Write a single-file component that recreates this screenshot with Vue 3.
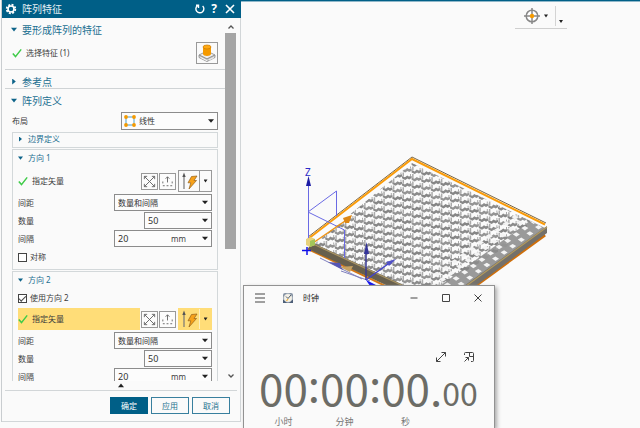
<script setup>
import { ref } from 'vue'

const layout = ref('线性')
const symmetric = ref(false)
const useSecond = ref(true)
const first = ref({ spacing: '数量和间隔', count: '50', gap: '20' })
const second = ref({ spacing: '数量和间隔', count: '50', gap: '20' })

// Cube lattice on the top face, with flatter tiles along the right-hand edge
const shade = ['#8b8b8b', '#949494', '#868686']
const bandTop = (x) => 209 + (544 - x) * 0.72
const cells = []
for (let i = 0; i < 26; i++) {
  for (let j = 0; j < 24; j++) {
    const x = 306 + i * 9.6
    const y = 150 + j * 7.4 + ((i * 1.6) % 7.4)
    if (x > 440 && y > bandTop(x)) continue
    cells.push({ x, y, fill: shade[(i * 2 + j) % 3] })
  }
}
const tiles = []
for (let a = 0; a < 16; a++) {
  for (let b = 0; b < 4; b++) {
    tiles.push({ x: 535 - a * 8.6 - b * 5, y: 227 + a * 6.3 - b * 5.4 })
  }
}
</script>

<template>
  <main class="workspace">
    <form class="dialog" @submit.prevent>
      <header class="dialog-head">
        <svg class="gear" viewBox="0 0 12 12" aria-hidden="true">
          <circle cx="6" cy="6" r="4.3" fill="none" stroke="#fff" stroke-width="1.8" stroke-dasharray="2 1.38" />
          <circle cx="6" cy="6" r="3" fill="none" stroke="#fff" stroke-width="1.6" />
        </svg>
        <h1>阵列特征</h1>
        <button type="button" class="head-btn" aria-label="重置">
          <svg viewBox="0 0 12 12"><path d="M3.500 2.600A4 4 0 1 0 8.600 2.900M4.500 5V2.200H2" fill="none" stroke="#fff" stroke-width="1.400" /></svg>
        </button>
        <button type="button" class="head-btn help" aria-label="帮助">?</button>
        <button type="button" class="head-btn" aria-label="关闭">
          <svg viewBox="0 0 12 12"><path d="M2 2l8 8M10 2l-8 8" stroke="#fff" stroke-width="1.600" /></svg>
        </button>
      </header>

      <div class="scroller">
        <div class="content">
          <section class="section">
            <h2 class="title"><i class="tri down"></i>要形成阵列的特征</h2>
            <div class="pick-row">
              <svg class="tick" viewBox="0 0 10 10"><path d="M.8 5.600l2.700 3L9.200 1.400" /></svg>
              <span class="label">选择特征 (1)</span>
              <button type="button" class="feature-btn" aria-label="特征">
                <svg viewBox="0 0 20 20">
                  <path d="M2 12l8-4 8 4-8 4z" fill="#eee" stroke="#888" stroke-width=".8" />
                  <path d="M2 12v2.500l8 4 8-4V12l-8 4z" fill="#d5d5d5" stroke="#888" stroke-width=".8" />
                  <path d="M3.500 14.500l6.500 3.200M12 17l5-2.500" stroke="#fff" stroke-width=".8" />
                  <path d="M6 4v7c0 2.600 8 2.600 8 0V4z" fill="#f59a00" />
                  <ellipse cx="10" cy="4" rx="4" ry="2" fill="#ffa914" stroke="#c97a00" stroke-width=".7" />
                </svg>
              </button>
            </div>
          </section>
          <section class="section">
            <h2 class="title"><i class="tri right"></i>参考点</h2>
          </section>
          <section class="section last">
            <h2 class="title"><i class="tri down"></i>阵列定义</h2>
            <div class="row layout-row">
              <label for="layout">布局</label>
              <div class="select-wrap layout-select">
                <svg class="linear" viewBox="0 0 12 12" aria-hidden="true">
                  <path d="M2 2h8v8H2z" fill="#fff" stroke="#4f9fc6" />
                  <g fill="#f59a00"><circle cx="2" cy="2" r="1.900" /><circle cx="10" cy="2" r="1.900" /><circle cx="2" cy="10" r="1.900" /><circle cx="10" cy="10" r="1.900" /></g>
                </svg>
                <select id="layout" v-model="layout"><option>线性</option></select>
                <i class="caret"></i>
              </div>
            </div>

            <div class="group">
              <h3 class="group-title flat"><i class="tri right"></i>边界定义</h3>
            </div>

            <div class="group">
              <h3 class="group-title"><i class="tri down"></i>方向 1</h3>
              <div class="vector-row spaced">
                <div class="vector-label">
                  <svg class="tick" viewBox="0 0 10 10"><path d="M.8 5.600l2.700 3L9.200 1.400" /></svg>
                  <span class="label">指定矢量</span>
                </div>
                <button type="button" class="small-btn" aria-label="反向"><svg viewBox="0 0 16 16"><path d="M2.500 13.500l11-11M2.500 2.500l11 11M10.500 2.500h3v3M2.500 5.500v-3h3M2.500 10.500v3h3M13.500 10.500v3h-3" /></svg></button>
                <button type="button" class="small-btn" aria-label="矢量构造器"><svg viewBox="0 0 16 16"><path d="M8 9V3M6 5l2-2 2 2M3 8v2M13 8v2M3 12.500h2M7 12.500h2M11 12.500h2" /></svg></button>
                <div class="split">
                  <button type="button" class="bolt" aria-label="自动判断的矢量"><svg viewBox="0 0 20 20"><path d="M5 18V4" stroke="#777" stroke-width="1.200" /><path d="M5 1.500L3.300 6h3.400z" fill="#555" /><path d="M12.500 5.500l5.500-.5-3 4.500h2.500L10 18l1.800-6.200H9z" fill="#f7a11a" stroke="#936019" stroke-width=".7" /></svg></button>
                  <button type="button" class="more" aria-label="更多矢量"><i class="caret tiny"></i></button>
                </div>
              </div>
              <div class="row">
                <label for="spacing1">间距</label>
                <div class="select-wrap wide"><select id="spacing1" v-model="first.spacing"><option>数量和间隔</option></select><i class="caret"></i></div>
              </div>
              <div class="row">
                <label for="count1">数量</label>
                <div class="combo narrow"><input id="count1" v-model="first.count" type="text"><button type="button" aria-label="数量选项"><i class="caret"></i></button></div>
              </div>
              <div class="row">
                <label for="gap1">间隔</label>
                <div class="combo wide"><input id="gap1" v-model="first.gap" type="text"><span>mm</span><button type="button" aria-label="间隔选项"><i class="caret"></i></button></div>
              </div>
              <label class="check"><input v-model="symmetric" type="checkbox">对称</label>
            </div>

            <div class="group">
              <h3 class="group-title"><i class="tri down"></i>方向 2</h3>
              <label class="check"><input v-model="useSecond" type="checkbox">使用方向 2</label>
              <div class="vector-row active">
                <div class="vector-label">
                  <svg class="tick" viewBox="0 0 10 10"><path d="M.8 5.600l2.700 3L9.200 1.400" /></svg>
                  <span class="label">指定矢量</span>
                </div>
                <button type="button" class="small-btn" aria-label="反向"><svg viewBox="0 0 16 16"><path d="M2.500 13.500l11-11M2.500 2.500l11 11M10.500 2.500h3v3M2.500 5.500v-3h3M2.500 10.500v3h3M13.500 10.500v3h-3" /></svg></button>
                <button type="button" class="small-btn" aria-label="矢量构造器"><svg viewBox="0 0 16 16"><path d="M8 9V3M6 5l2-2 2 2M3 8v2M13 8v2M3 12.500h2M7 12.500h2M11 12.500h2" /></svg></button>
                <div class="split">
                  <button type="button" class="bolt" aria-label="自动判断的矢量"><svg viewBox="0 0 20 20"><path d="M5 18V4" stroke="#777" stroke-width="1.200" /><path d="M5 1.500L3.300 6h3.400z" fill="#555" /><path d="M12.500 5.500l5.500-.5-3 4.500h2.500L10 18l1.800-6.200H9z" fill="#f7a11a" stroke="#936019" stroke-width=".7" /></svg></button>
                  <button type="button" class="more" aria-label="更多矢量"><i class="caret tiny"></i></button>
                </div>
              </div>
              <div class="row">
                <label for="spacing2">间距</label>
                <div class="select-wrap wide"><select id="spacing2" v-model="second.spacing"><option>数量和间隔</option></select><i class="caret"></i></div>
              </div>
              <div class="row">
                <label for="count2">数量</label>
                <div class="combo narrow"><input id="count2" v-model="second.count" type="text"><button type="button" aria-label="数量选项"><i class="caret"></i></button></div>
              </div>
              <div class="row">
                <label for="gap2">间隔</label>
                <div class="combo wide"><input id="gap2" v-model="second.gap" type="text"><span>mm</span><button type="button" aria-label="间隔选项"><i class="caret"></i></button></div>
              </div>
            </div>
          </section>
        </div>
        <div class="scrollbar" aria-hidden="true">
          <svg viewBox="0 0 10 10"><path d="M2.500 6.500L5 4l2.500 2.500" /></svg>
          <div class="track"><div class="thumb"></div></div>
          <svg viewBox="0 0 10 10"><path d="M2.500 3.500L5 6l2.500-2.500" /></svg>
        </div>
      </div>

      <div class="collapse"><i class="tri up"></i></div>
      <footer class="actions">
        <button type="submit" class="primary">确定</button>
        <button type="button">应用</button>
        <button type="button">取消</button>
      </footer>
    </form>

    <div class="canvas">
      <div class="toolbar">
        <button type="button" class="target" aria-label="定向视图">
          <svg viewBox="0 0 16 16">
            <circle cx="8" cy="8" r="5.800" fill="#fff" stroke="#888" stroke-width="1.500" />
            <path d="M8 0v6M8 10v6M0 8h6M10 8h6" stroke="#888" stroke-width="1.500" />
            <circle cx="8" cy="8" r="2.200" fill="#f59a00" />
          </svg>
          <i class="caret tiny"></i>
        </button>
        <button type="button" class="overflow" aria-label="工具条选项"><i class="caret tiny"></i></button>
      </div>

      <svg class="model" viewBox="300 150 260 160" role="img" aria-label="阵列预览">
        <defs>
          <clipPath id="top-face"><path d="M412 163L545 228L441 304L312 246z" /></clipPath>
        </defs>
        <path d="M412 157L546 222L546 229L441 306L308 248L308 238z" fill="#fbfbfb" />
        <g clip-path="url(#top-face)">
          <path d="M545 210L405 311L441 311L552 230z" fill="#9a9a9a" />
          <g v-for="(c, n) in cells" :key="n" :transform="`translate(${c.x} ${c.y})`">
            <path d="M0 2.500L3 3.800 5.200 2l1.600 1 2.800-.5v2.200L7.200 6 5.500 5 3.200 6.500 0 4.800z" :fill="c.fill" />
            <path d="M.5-1H2v4H.5zM8 .5h1v2H8z" fill="#aaa" />
          </g>
          <path v-for="(t, n) in tiles" :key="'t' + n" d="M0 0l3.500-2L7 .2 3.500 2.500z" fill="#f4f4f4" :transform="`translate(${t.x} ${t.y})`" />
        </g>
        <path d="M545 235L445 308" stroke="#cf6f0a" stroke-width="3" />
        <path d="M547 226v7L443 310h-4v-6z" fill="#74716b" />
        <path d="M547 227L440 305" stroke="#b29a5e" stroke-width="1.200" />
        <path d="M308 249L440 312" stroke="#d77711" stroke-width="2" />
        <path d="M311 242L440 302v8L308 249z" fill="#675f4d" />
        <path d="M311 243L440 303" stroke="#a89364" stroke-width="1.300" />
        <path d="M308 237L412 157L546 223" fill="none" stroke="#7a6542" stroke-width="1" />
        <path d="M308 239L412 159L545 224.500" fill="none" stroke="#fa9c0a" stroke-width="2" />
        <g fill="none" stroke="#6a6ae4">
          <path d="M308.500 184V240M308 212L336.500 191V216M308 212L344.500 230V258" />
          <path d="M307 247v8M302 250.500h9" stroke="#1010e8" stroke-width="1.500" />
          <path d="M320 258L362 279M341 271L370 281" stroke="#8080bd" />
          <path d="M366 280V251" stroke="#383895" stroke-width="1.500" />
          <path d="M366 280L388 264" stroke="#4444ce" stroke-width="1.500" />
        </g>
        <path d="M308.500 176L306 186h5z" fill="#1b1ba4" />
        <path d="M366.500 242L364 254h5z" fill="#34349a" />
        <path d="M396 259l-10 3 3 4z" fill="#5151c7" />
        <path d="M328 262l12 1 3 7z" fill="#5555b4" />
        <path d="M340 267l13-1-3 6z" fill="#c7a263" />
        <path d="M313 243L345 221" stroke="#f09414" stroke-width="1.500" />
        <path d="M352 215l-9 3 2 5 4 0z" fill="#dc8716" />
        <path d="M306 239l5-2 4 2v6l-5 2-4-2z" fill="#e7d17b" />
        <path d="M310 241l5-2v6l-5 2z" fill="#a3c559" />
        <path d="M366 280l12 6h-8z" fill="#1212ef" />
      </svg>
      <span class="axis">Z</span>

      <section class="clock">
        <header class="clock-head">
          <button type="button" aria-label="菜单"><svg viewBox="0 0 12 12"><path d="M1 2h10M1 6h10M1 10h10" /></svg></button>
          <svg class="clock-logo" viewBox="0 0 12 12" aria-hidden="true">
            <path d="M1 3q0-2 2-2h6q2 0 2 2v8H1z" fill="#8693a3" />
            <path d="M1 8h10v3H1z" fill="#4d5f78" />
            <circle cx="6" cy="6" r="4.300" fill="#f5f2e9" stroke="#b4bcc6" stroke-width=".6" />
            <path d="M4 4.500L6 6.500l3-3.500" fill="none" stroke="#4e5965" />
            <path d="M4.500 9L6 7" stroke="#f2b233" stroke-width="1.200" />
          </svg>
          <h2>时钟</h2>
          <button type="button" aria-label="最小化"><svg viewBox="0 0 12 12"><path d="M2.500 6h7" /></svg></button>
          <button type="button" aria-label="最大化"><svg viewBox="0 0 12 12"><path d="M2.500 2.500h7v7h-7z" /></svg></button>
          <button type="button" aria-label="关闭"><svg viewBox="0 0 12 12"><path d="M2.500 2.500l7 7M9.500 2.500l-7 7" /></svg></button>
        </header>
        <div class="clock-tools">
          <button type="button" aria-label="展开"><svg viewBox="0 0 12 12"><path d="M1.500 10.500l9-9M6.500 1.500h4v4M1.500 6.500v4h4" /></svg></button>
          <button type="button" aria-label="保持在顶部"><svg viewBox="0 0 12 12"><path d="M1.500 4V2.500q0-1 1-1h7q1 0 1 1v7q0 1-1 1H8M6.500 1.500v4h4M1.500 10.500l4-4M2.500 6.500h3v3" /></svg></button>
        </div>
        <div class="time">
          <b>00</b><b class="colon">:</b><b>00</b><b class="colon">:</b><b>00</b><b>.</b><b class="fraction">00</b>
          <span class="unit hours">小时</span><span class="unit minutes">分钟</span><span class="unit seconds">秒</span>
        </div>
      </section>
    </div>
  </main>
</template>

<style>
body { margin: 0; background: #fafafa; overflow: hidden; }
</style>

<style scoped>
* { box-sizing: border-box; }
.workspace {
  display: flex;
  height: 100vh;
  padding-left: 2px;
  background: #fafafa;
  color: #3c3c3c;
  font: 8px/12px "Noto Sans", "Noto Sans CJK SC", sans-serif;
}
h1, h2, h3 { margin: 0; font-weight: 400; }
button, input, select { font: inherit; color: inherit; margin: 0; padding: 0; border: 0; background: none; border-radius: 0; }
button { display: flex; align-items: center; justify-content: center; }
svg { display: block; }

.dialog {
  display: flex;
  flex-direction: column;
  flex: 0 0 239px;
  margin-bottom: 6px;
  border-right: 1px solid #d2d6d8;
  border-bottom: 1px solid #d2d6d8;
  box-shadow: -1px 0 #c9cdd0;
}
.dialog-head {
  display: flex;
  align-items: center;
  flex: 0 0 18px;
  gap: 2px;
  padding: 0 5px 0 3px;
  margin-right: -1px;
  background: #005f87;
  color: #fff;
}
.dialog-head h1 { flex: 1; padding-left: 3px; font-size: 10px; line-height: 18px; color: #e4eff4; }
.gear { width: 12px; height: 12px; }
.head-btn { width: 12px; height: 12px; }
.head-btn svg { width: 12px; height: 12px; }
.head-btn:last-child { margin-left: 2px; }
.help { font-size: 12px; font-weight: 700; }

.scroller { display: flex; flex: 1; min-height: 0; overflow: hidden; }
.content { flex: 1; padding-left: 3px; }
.section { border-bottom: 1px solid #cfd3d5; padding: 5px 7px 0 5px; }
.section.last { border-bottom: 0; }
.title { display: flex; align-items: center; height: 13px; font-size: 10px; color: #1c6f91; }
.title .tri { margin: 0 5px 0 1px; }
.tri { width: 6px; height: 6px; flex: none; background: #0d6389; margin-right: 5px; }
.tri.down { clip-path: polygon(0 20%, 100% 20%, 50% 85%); }
.tri.right { clip-path: polygon(20% 0, 80% 50%, 20% 100%); }
.tri.up { background: #222; clip-path: polygon(0 80%, 50% 15%, 100% 80%); margin: 0; }

.pick-row { display: flex; align-items: center; height: 27px; margin-top: 6px; padding: 0 0 5px 2px; }
.tick { width: 10px; height: 10px; fill: none; stroke: #3ecb48; stroke-width: 1.5; }
.label { padding-left: 4px; flex: 1; }
.feature-btn { width: 22px; height: 22px; border: 1px solid #999; }
.feature-btn svg { width: 20px; height: 20px; }

.row { display: flex; align-items: center; justify-content: space-between; height: 17px; margin: 1px 5px 0; }
.layout-row { height: 18px; margin: 5px 0 2px 2px; }
.select-wrap { display: flex; align-items: center; height: 100%; border: 1px solid #8c8c8c; background: #fcfcfc; }
.select-wrap select { appearance: none; flex: 1; min-width: 0; height: 100%; padding-left: 3px; outline: 0; color: #333; }
.layout-select { flex: 0 0 97px; padding-left: 2px; }
.linear { width: 12px; height: 12px; }
.wide { flex: 0 0 98px; }
.narrow { flex: 0 0 68px; }
.caret { flex: none; width: 6px; height: 5px; margin-right: 3px; background: #222; clip-path: polygon(0 15%, 100% 15%, 50% 85%); }
.caret.tiny { width: 4px; height: 4px; margin: 0; }
.combo { display: flex; align-items: center; height: 100%; border: 1px solid #8c8c8c; background: #fcfcfc; }
.combo input { flex: 1; min-width: 0; width: 0; height: 100%; padding-left: 3px; outline: 0; font-size: 9px; color: #333; }
.combo button { height: 100%; }
.combo span { padding-right: 16px; }

.group { margin: 1px 0 0 2px; border: 1px solid #d3d8da; padding-bottom: 2px; }
.group-title { display: flex; align-items: center; height: 16px; padding-left: 5px; font-size: 8px; color: #1c6f91; }
.group-title.flat { height: 12px; }
.group-title .tri { width: 5px; height: 5px; margin-right: 5px; }
.vector-row { display: flex; align-items: center; height: 22px; margin: 0 5px 2px; }
.vector-row.spaced { margin-top: 4px; }
.vector-label { display: flex; align-items: center; align-self: stretch; flex: 1; margin-right: 1px; }
.small-btn { width: 17px; height: 17px; margin-right: 1px; border: 1px solid #999; background: #fcfcfc; }
.small-btn svg { width: 15px; height: 15px; fill: none; stroke: #666; }
.split { display: flex; align-self: stretch; width: 34px; border: 1px solid #999; margin-left: 1px; }
.bolt { flex: 1; border-right: 1px solid #999; }
.bolt svg { width: 20px; height: 20px; }
.more { width: 11px; }
.active .vector-label, .active .split { background: #ffdd78; }
.active .split { border-color: #ffdd78; }
.active .bolt { border-color: #fff0c0; }
.check { display: flex; align-items: center; gap: 3px; height: 20px; margin-left: 5px; }
.check input { appearance: none; display: grid; place-items: center; width: 9px; height: 9px; border: 1px solid #444; background: #fff; }
.check input:checked::after { content: ""; width: 3px; height: 6px; border: solid #444; border-width: 0 1px 1px 0; transform: rotate(45deg) translate(-1px, 0); }

.scrollbar { display: flex; flex-direction: column; align-items: center; flex: 0 0 15px; padding: 4px 4px 0 0; }
.scrollbar svg { width: 10px; height: 10px; fill: none; stroke: #555; stroke-width: 1.3; }
.track { flex: 1; align-self: stretch; padding-top: 1px; }
.thumb { height: 64%; background: #a5a5a5; }
.collapse { display: flex; align-items: center; justify-content: center; flex: 0 0 10px; margin: 0 3px; border-bottom: 1px solid #d2d6d8; }
.actions { display: flex; justify-content: flex-end; gap: 3px; padding: 6px 10px 7px; }
.actions button { width: 38px; height: 17px; border: 1px solid #387f9e; color: #25728f; }
.actions .primary { background: #005f87; border-color: #005f87; color: #fff; }

.canvas { position: relative; flex: 1; min-width: 0; overflow: hidden; background: #fafafa; border-top: 1px solid #005f87; box-shadow: inset 0 1px #8fb7c9; }
.toolbar { position: absolute; top: 5px; right: 73px; display: flex; width: 52px; height: 23px; padding-left: 9px; border-bottom: 1px solid #cfcfcf; }
.target { gap: 4px; padding-right: 7px; height: 20px; border-right: 1px solid #d4d4d4; }
.target svg { width: 16px; height: 16px; }
.overflow { padding: 9px 0 0 3px; }
.model { position: absolute; left: 59px; top: 149px; width: 260px; height: 160px; }
.axis { position: absolute; left: 64px; top: 165px; color: #2a2ac8; font-size: 10px; }

.clock { position: absolute; left: 2px; top: 284px; bottom: 0; width: 252px; border: 1px solid #929292; border-bottom: 0; background: #fafafa; box-shadow: 2px 2px 4px #aaa; }
.clock-head { display: flex; align-items: center; height: 24px; padding: 0 10px; }
.clock button svg { width: 12px; height: 12px; fill: none; stroke: #444; }
.clock-logo { width: 12px; height: 12px; margin: 0 9px 0 16px; }
.clock-head h2 { flex: 1; font-size: 8px; color: #222; }
.clock-head button + button { margin-left: 20px; }
.clock-tools { display: flex; justify-content: flex-end; gap: 16px; padding: 41px 19px 0 0; }
.time { display: grid; grid-template-columns: repeat(7, max-content); align-items: baseline; padding-left: 15px; color: #6c6c66; }
.time b { font: 400 44px/48px "Noto Sans CJK SC", sans-serif; }
.time .colon { align-self: start; margin-top: -4px; }
.time .fraction { font-size: 32px; }
.unit { grid-row: 2; justify-self: center; font-size: 9px; line-height: 12px; color: #777; }
.hours { grid-column: 1; }
.minutes { grid-column: 3; }
.seconds { grid-column: 5; }
</style>
